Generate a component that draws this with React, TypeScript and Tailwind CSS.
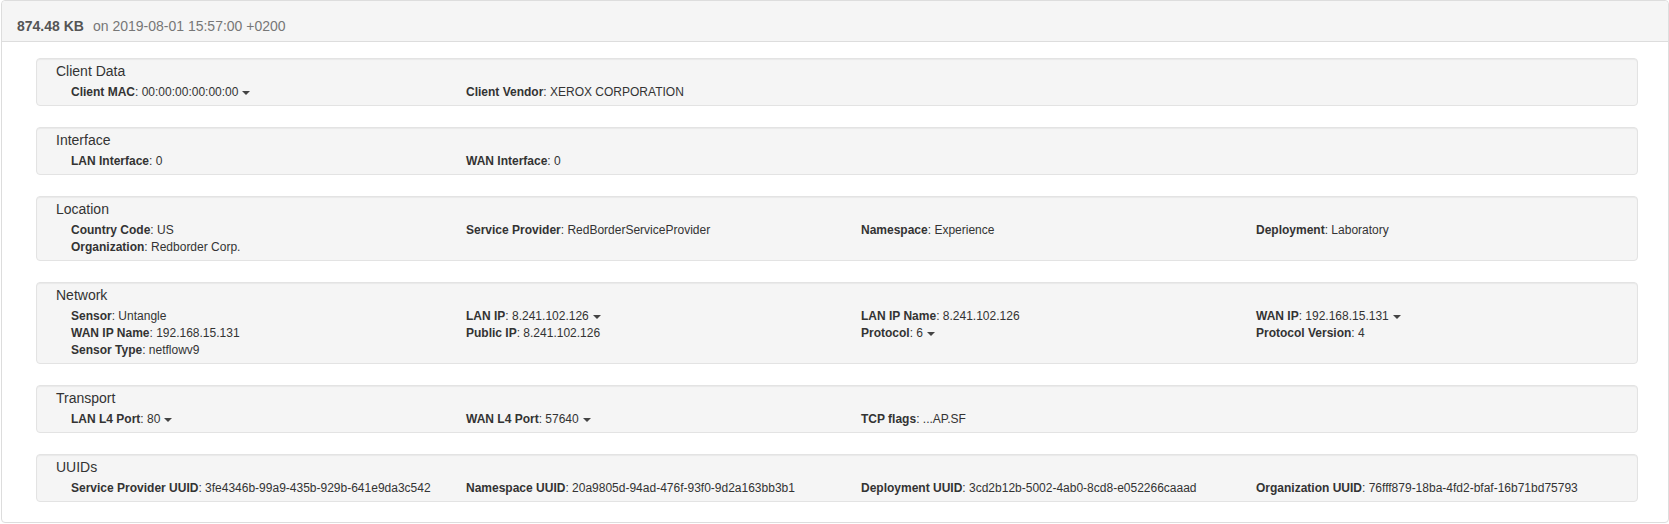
import React from "react";

type Field = { label: string; value: string; caret?: boolean };
type Section = { title: string; fields: Field[] };

const sections: Section[] = [
  {
    title: "Client Data",
    fields: [
      { label: "Client MAC", value: "00:00:00:00:00:00", caret: true },
      { label: "Client Vendor", value: "XEROX CORPORATION" },
    ],
  },
  {
    title: "Interface",
    fields: [
      { label: "LAN Interface", value: "0" },
      { label: "WAN Interface", value: "0" },
    ],
  },
  {
    title: "Location",
    fields: [
      { label: "Country Code", value: "US" },
      { label: "Service Provider", value: "RedBorderServiceProvider" },
      { label: "Namespace", value: "Experience" },
      { label: "Deployment", value: "Laboratory" },
      { label: "Organization", value: "Redborder Corp." },
    ],
  },
  {
    title: "Network",
    fields: [
      { label: "Sensor", value: "Untangle" },
      { label: "LAN IP", value: "8.241.102.126", caret: true },
      { label: "LAN IP Name", value: "8.241.102.126" },
      { label: "WAN IP", value: "192.168.15.131", caret: true },
      { label: "WAN IP Name", value: "192.168.15.131" },
      { label: "Public IP", value: "8.241.102.126" },
      { label: "Protocol", value: "6", caret: true },
      { label: "Protocol Version", value: "4" },
      { label: "Sensor Type", value: "netflowv9" },
    ],
  },
  {
    title: "Transport",
    fields: [
      { label: "LAN L4 Port", value: "80", caret: true },
      { label: "WAN L4 Port", value: "57640", caret: true },
      { label: "TCP flags", value: "...AP.SF" },
    ],
  },
  {
    title: "UUIDs",
    fields: [
      { label: "Service Provider UUID", value: "3fe4346b-99a9-435b-929b-641e9da3c542" },
      { label: "Namespace UUID", value: "20a9805d-94ad-476f-93f0-9d2a163bb3b1" },
      { label: "Deployment UUID", value: "3cd2b12b-5002-4ab0-8cd8-e052266caaad" },
      { label: "Organization UUID", value: "76fff879-18ba-4fd2-bfaf-16b71bd75793" },
    ],
  },
];

function Caret() {
  return (
    <span className="ml-[4px] inline-block h-0 w-0 border-x-4 border-t-4 border-x-transparent border-t-[#444] align-middle" />
  );
}

function Well({ section, last }: { section: Section; last: boolean }) {
  return (
    <div
      className={`${last ? "mb-[20px]" : "mb-[21px]"} rounded-[4px] border border-[#e3e3e3] bg-[#f5f5f5] pb-[4px] pl-[19px] pt-[2px] shadow-[inset_0_1px_1px_rgba(0,0,0,0.05)]`}
    >
      <div className="text-[14px] leading-[20px] text-[#333]">{section.title}</div>
      <div className="mt-[3px] grid grid-cols-[395px_395px_395px_1fr] pl-[15px] text-[12px] leading-[17px] text-[#333]">
        {section.fields.map((f) => (
          <div key={f.label} className="whitespace-nowrap">
            <span className="font-bold">{f.label}</span>: {f.value}
            {f.caret && <Caret />}
          </div>
        ))}
      </div>
    </div>
  );
}

export default function App() {
  return (
    <div className="min-h-[524px] bg-white font-['Liberation_Sans',Arial,sans-serif]">
      <div className="ml-px rounded-[4px] border border-[#ddd] bg-white">
        <div className="rounded-t-[4px] border-b border-[#ddd] bg-[#f5f5f5] pb-[5px] pl-[15px] pt-[15px] text-[14px] leading-[20px]">
          <span className="font-bold text-[#555]">874.48 KB</span>
          <span className="ml-[9px] text-[#777]">on 2019-08-01 15:57:00 +0200</span>
        </div>
        <div className="pl-[34px] pr-[30px] pt-[16px]">
          {sections.map((s, i) => (
            <Well key={s.title} section={s} last={i === sections.length - 1} />
          ))}
        </div>
      </div>
    </div>
  );
}
